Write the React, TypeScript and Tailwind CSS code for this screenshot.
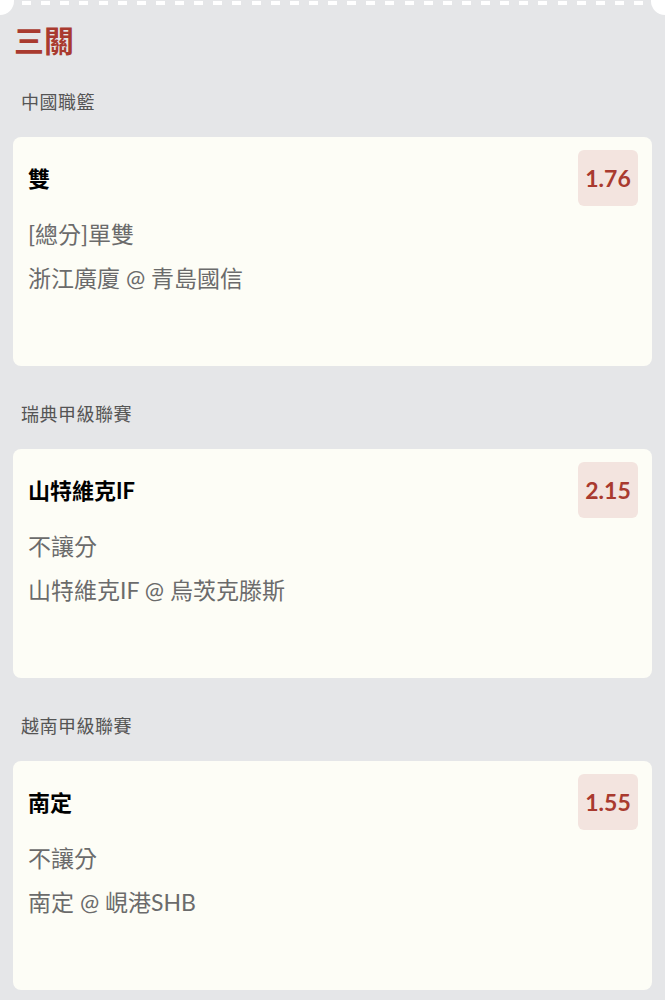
const picks = [
  {
    league: '中國職籃',
    pick: '雙',
    odds: '1.76',
    market: '[總分]單雙',
    match: '浙江廣廈 @ 青島國信',
  },
  {
    league: '瑞典甲級聯賽',
    pick: '山特維克IF',
    odds: '2.15',
    market: '不讓分',
    match: '山特維克IF @ 烏茨克滕斯',
  },
  {
    league: '越南甲級聯賽',
    pick: '南定',
    odds: '1.55',
    market: '不讓分',
    match: '南定 @ 峴港SHB',
  },
];

function PickCard({ pick }: { pick: (typeof picks)[number] }) {
  return (
    <div className="mt-[23px] mx-[13px] h-[229px] rounded-lg bg-[#fdfdf6] pt-[13px] pl-[15px] pr-[14px]">
      <div className="flex items-center justify-between h-[56px]">
        <span className="text-[22px] font-bold text-black">{pick.pick}</span>
        <span className="flex items-center justify-center w-[60px] h-[56px] rounded-md bg-[#f3e4df] text-[23px] font-bold text-[#a93a2f]">
          {pick.odds}
        </span>
      </div>
      <p className="mt-[5px] text-[23px] leading-[46px] text-[#6b6b6b]">{pick.market}</p>
      <p className="-mt-[2px] text-[23px] leading-[46px] text-[#6b6b6b]">{pick.match}</p>
    </div>
  );
}

export default function App() {
  return (
    <div className="relative min-h-screen overflow-hidden bg-[#e5e6e8] pb-10 font-['Lato','Noto_Sans_CJK_TC',sans-serif]">
      {/* ticket edge */}
      <div className="absolute -left-[14px] -top-[13px] w-[28px] h-[28px] rounded-full bg-white" />
      <div className="absolute -right-[14px] -top-[13px] w-[28px] h-[28px] rounded-full bg-white" />
      <div className="flex justify-between px-[22px] pt-[1px] h-[8px]">
        {Array.from({ length: 33 }).map((_, i) => (
          <span key={i} className="w-[9px] h-[4px] bg-white" />
        ))}
      </div>

      <h1 className="mt-[12px] pl-[14px] text-[30px] leading-[40px] font-bold text-[#a93a2f]">三關</h1>

      {picks.map((p, i) => (
        <section key={p.league} className={i === 0 ? 'mt-[30px]' : 'mt-[36px]'}>
          <h2 className="pl-[21px] text-[18px] leading-[24px] tracking-[0.5px] text-[#555]">{p.league}</h2>
          <PickCard pick={p} />
        </section>
      ))}
    </div>
  );
}
